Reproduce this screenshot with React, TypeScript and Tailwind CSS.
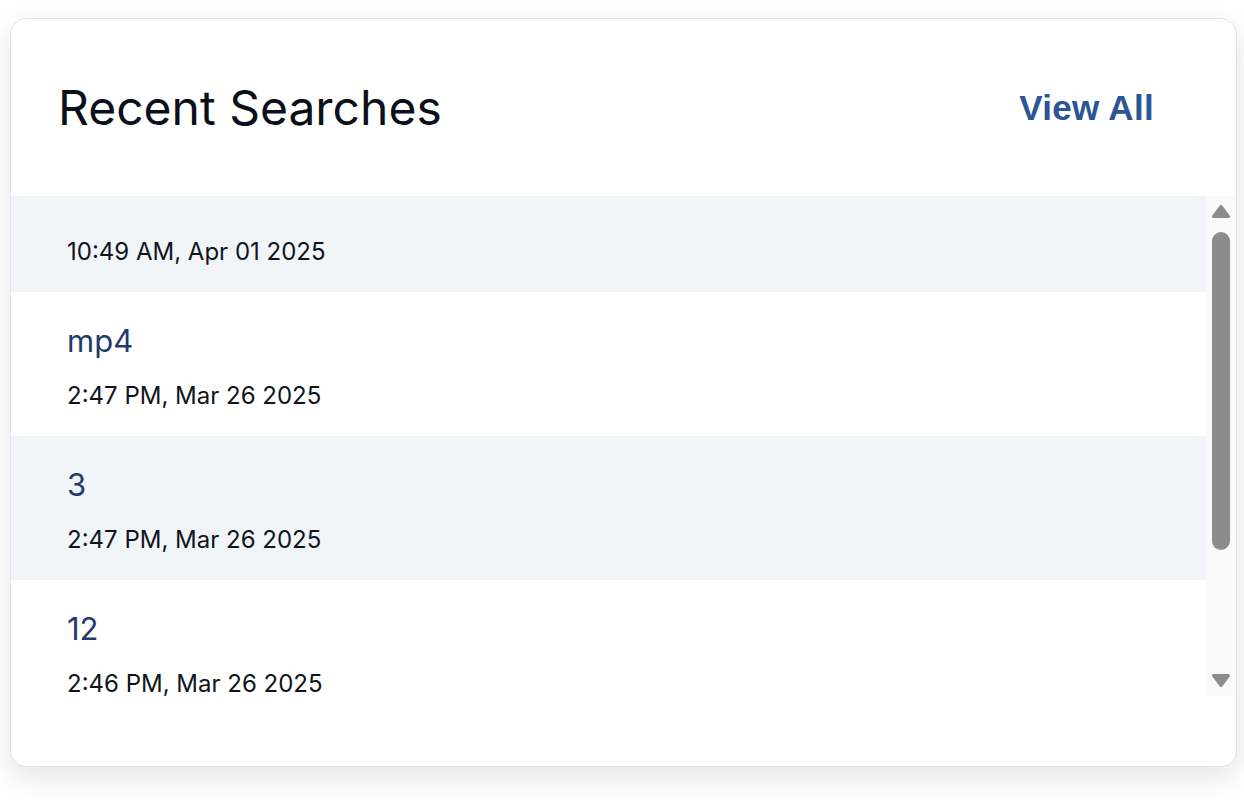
import React from "react";

const items = [
  { title: "", date: "10:49 AM, Apr 01 2025" },
  { title: "mp4", date: "2:47 PM, Mar 26 2025" },
  { title: "3", date: "2:47 PM, Mar 26 2025" },
  { title: "12", date: "2:46 PM, Mar 26 2025" },
];

function Arrow({ down }: { down?: boolean }) {
  return (
    <svg width="18" height="13" viewBox="0 0 18 13" className="block">
      <polygon
        points={down ? "1.5,1.5 16.5,1.5 9,11.5" : "9,1.5 16.5,11.5 1.5,11.5"}
        fill="#8c8c8c"
        stroke="#8c8c8c"
        strokeWidth="3"
        strokeLinejoin="round"
      />
    </svg>
  );
}

export default function App() {
  return (
    <div className="w-[1244px] h-[800px] bg-white pl-[10px] pt-[18px] font-['Inter','Noto_Sans',sans-serif]">
      <div className="w-[1227px] h-[749px] rounded-[16px] border border-[#e2e3e8] bg-white shadow-[0_10px_28px_rgba(0,0,0,0.11)] flex flex-col overflow-hidden">
        <div className="h-[177px] flex items-center justify-between pl-[47px] pr-[82px]">
          <h2 className="text-[48px] leading-[56px] text-[#0b0f19] font-normal">Recent Searches</h2>
          <a className="font-['Liberation_Sans',Arial,sans-serif] font-bold text-[35px] leading-[40px] tracking-[0.3px] text-[#2c5596]">
            View All
          </a>
        </div>
        <div className="h-[500px] flex">
          <div className="flex-1 overflow-hidden">
            {items.map((it, i) => (
              <div
                key={i}
                className={`pl-[56px] flex flex-col pb-[28px] ${i % 2 === 0 ? "bg-[#f1f4f9]" : "bg-white"} ${it.title ? "pt-[31px]" : "pt-[44px]"}`}
              >
                {it.title && (
                  <div className="text-[31px] leading-[36px] mb-[25px] text-[#1f3a6b]">{it.title}</div>
                )}
                <div className="text-[24px] leading-[24px] text-[#0f1420]">{it.date}</div>
              </div>
            ))}
          </div>
          <div className="w-[30px] bg-[#fafafa] flex flex-col items-center pt-[9px] pb-[9px]">
            <Arrow />
            <div className="mt-[14px] w-[18px] h-[318px] rounded-full bg-[#8c8c8c]" />
            <div className="flex-1" />
            <Arrow down />
          </div>
        </div>
      </div>
    </div>
  );
}
